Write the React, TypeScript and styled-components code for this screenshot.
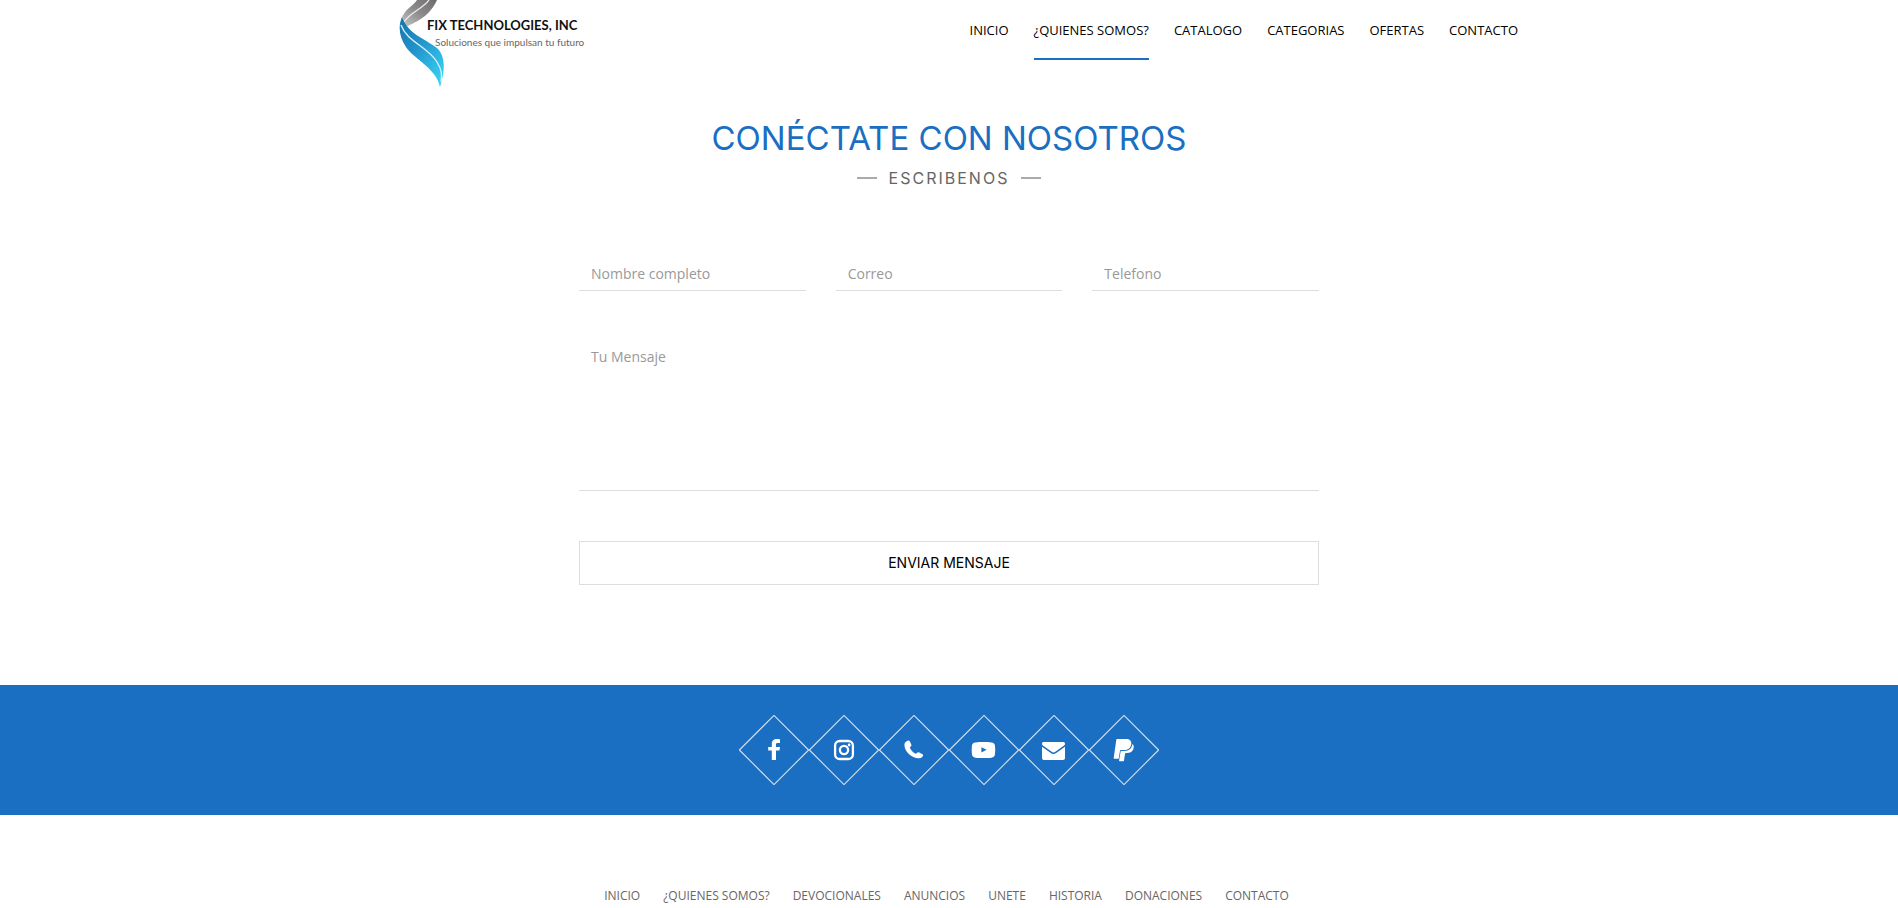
import React from "react";
import styled, { createGlobalStyle } from "styled-components";

const BLUE = "#1a6fc3";
const BODY_FONT = '"Open Sans", "Noto Sans", sans-serif';
const TITLE_FONT = 'Inter, "Open Sans", sans-serif';
const LOGO_FONT = 'Lato, "Open Sans", sans-serif';

const GlobalStyle = createGlobalStyle`
  *, *::before, *::after { box-sizing: border-box; }
  body {
    margin: 0;
    background: #fff;
    color: #666;
    font-family: ${BODY_FONT};
    font-size: 14px;
    line-height: 20px;
    overflow-x: hidden;
  }
`;

const Header = styled.header`
  display: flex;
  justify-content: space-between;
  align-items: flex-start;
  width: 100%;
  max-width: 1170px;
  margin: 0 auto;
  padding: 0 16px 0 15px;
`;

const LogoLink = styled.a`
  display: block;
  margin-left: 20px;
`;

const LogoArt = styled.svg`
  display: block;
`;

const MainNav = styled.nav`
  display: flex;
  gap: 25px;
`;

const NavLink = styled.a<{ $active?: boolean }>`
  padding: 20px 0 18px;
  border-bottom: 2px solid ${(p) => (p.$active ? BLUE : "transparent")};
  color: #000;
  font-size: 13px;
  text-decoration: none;
`;

const Contact = styled.main`
  width: 100%;
  max-width: 770px;
  margin: 0 auto;
  padding: 28px 15px 100px;
`;

const Title = styled.h2`
  margin: 0;
  color: ${BLUE};
  font-family: ${TITLE_FONT};
  font-size: 33px;
  font-weight: 400;
  line-height: 40px;
  text-align: center;
`;

const Subtitle = styled.p`
  display: flex;
  justify-content: center;
  align-items: center;
  gap: 12px;
  margin: 9px 0 68px;
  font-family: ${TITLE_FONT};
  font-size: 16px;
  line-height: 22px;
  letter-spacing: 2px;

  &::before, &::after {
    content: "";
    width: 20px;
    height: 2px;
    background: #aaa;
  }
`;

const Form = styled.form`
  display: grid;
  grid-template-columns: repeat(3, 1fr);
  column-gap: 30px;
  row-gap: 50px;
`;

const Input = styled.input`
  width: 100%;
  height: 34px;
  padding: 6px 12px;
  border: 0;
  border-bottom: 1px solid #ddd;
  background: transparent;
  font: 14px/20px ${BODY_FONT};
  color: #555;
  &::placeholder { color: #999; opacity: 1; }
`;

const Message = styled.textarea`
  grid-column: 1 / -1;
  display: block;
  width: 100%;
  height: 150px;
  padding: 6px 12px;
  border: 0;
  border-bottom: 1px solid #ddd;
  background: transparent;
  font: 14px/20px ${BODY_FONT};
  color: #555;
  resize: none;
  &::placeholder { color: #999; opacity: 1; }
`;

const Submit = styled.button`
  grid-column: 1 / -1;
  height: 44px;
  padding: 0 12px;
  border: 1px solid #ddd;
  background: #fff;
  color: #000;
  font: 14px/20px ${TITLE_FONT};
  cursor: pointer;
`;

const SocialBand = styled.section`
  display: flex;
  justify-content: center;
  padding: 30px 15px;
  background: ${BLUE};
`;

const SocialLink = styled.a`
  display: block;
  width: 70px;
  height: 70px;
  color: #fff;
`;

const Footer = styled.footer`
  padding: 71px 20px 40px 15px;
`;

const FooterNav = styled.nav`
  display: flex;
  flex-wrap: wrap;
  justify-content: center;
  gap: 23px;
`;

const FooterLink = styled.a`
  color: #666;
  font-size: 12px;
  text-decoration: none;
`;

const navItems = ["INICIO", "¿QUIENES SOMOS?", "CATALOGO", "CATEGORIAS", "OFERTAS", "CONTACTO"];
const footerItems = ["INICIO", "¿QUIENES SOMOS?", "DEVOCIONALES", "ANUNCIOS", "UNETE", "HISTORIA", "DONACIONES", "CONTACTO"];
const fields = [
  { label: "Nombre completo", type: "text" },
  { label: "Correo", type: "email" },
  { label: "Telefono", type: "tel" },
];

const socials = [
  {
    name: "Facebook",
    icon: <path d="M41 24.2v3.8h-2.3c-1.2 0-1.7.5-1.7 1.5v2.4h4l-.5 3.7H37V45h-4.2v-9.4h-3.6v-3.7h3.6V29c0-3.2 2.1-5 5.1-5 1.3 0 2.5.1 3.1.2z" fill="currentColor" />,
  },
  {
    name: "Instagram",
    icon: (
      <>
        <rect x="26.1" y="26" width="17.8" height="18" rx="4.6" fill="none" stroke="currentColor" strokeWidth="2.3" />
        <circle cx="35" cy="35" r="4.1" fill="none" stroke="currentColor" strokeWidth="2.3" />
        <circle cx="40.1" cy="30" r="1.4" fill="currentColor" />
      </>
    ),
  },
  {
    name: "Telefono",
    icon: <path d="M28.6 25.7c.9-.4 1.7-.2 2.1.6l1.6 3.2c.3.7.2 1.2-.3 1.8l-1.2 1.2c1.1 3 3.2 5 6.1 6.2l1.7-1.2c.5-.4 1-.4 1.6-.1l3.2 1.8c.7.4.8 1 .5 1.7-.8 1.6-2.4 2.4-4.3 2.4-7 0-14.2-6.6-14.2-13.5 0-2 1.3-3.4 3.2-4.1z" fill="currentColor" />,
  },
  {
    name: "YouTube",
    icon: (
      <path fillRule="evenodd" d="M26.5 27.4c4.4-.5 11.6-.5 15.9 0 2.3.2 3.4 1.3 3.6 3.6.3 2.6.3 5.3 0 8-.2 2.3-1.3 3.4-3.6 3.7-4.3.4-11.5.4-15.9 0-2.3-.3-3.4-1.4-3.6-3.7-.3-2.7-.3-5.4 0-8 .2-2.3 1.3-3.4 3.6-3.6zM32.4 32.2v5.2l5.2-2.6z" fill="currentColor" />
    ),
  },
  {
    name: "Correo",
    icon: (
      <>
        <path d="M25 27h19c1.3 0 2 .7 2 1.7 0 .9-.5 1.5-1.2 2l-8.5 6c-1.3.9-2.3.9-3.6 0l-8.5-6c-.7-.5-1.2-1.1-1.2-2 0-1 .7-1.7 2-1.7z" fill="currentColor" />
        <path d="M23 31.8l8.8 6.2c1.9 1.3 3.5 1.3 5.4 0l8.8-6.2V43c0 1.3-.7 2-2 2H25c-1.3 0-2-.7-2-2z" fill="currentColor" />
      </>
    ),
  },
  {
    name: "PayPal",
    icon: (
      <>
        <path d="M28 24h9.1c3.4 0 5.7 1.9 5.2 5.3-.6 4-3.4 5.8-7.3 5.8h-2.8c-.8 0-1.1.4-1.3 1.1l-1.2 7.6h-4.5c-.4 0-.6-.3-.5-.7l2.6-18.3c.1-.5.3-.8.7-.8z" fill="currentColor" />
        <path d="M43.4 29.1c1.2.8 1.6 2.1 1.2 4-.7 3.5-3 4.9-6.5 4.9h-1c-.7 0-1 .4-1.1 1l-1 6.6c-.1.5-.3.7-.8.7h-3.6c-.4 0-.6-.3-.5-.7l1.5-9c.1-.5.4-.7.9-.7h2.8c4.5 0 7.6-2.1 8.1-6.8z" fill="currentColor" />
      </>
    ),
  },
];

function Logo() {
  return (
    <LogoArt width="190" height="90" viewBox="0 0 190 90" role="img" aria-label="Fix Technologies, Inc">
      <defs>
        <linearGradient id="steel" x1="0" y1="1" x2="1" y2="0">
          <stop offset="0" stopColor="#c9c9c9" />
          <stop offset="0.5" stopColor="#8d8b8b" />
          <stop offset="1" stopColor="#6e6c6c" />
        </linearGradient>
        <linearGradient id="water" x1="0" y1="0" x2="0.8" y2="1">
          <stop offset="0" stopColor="#1673ac" />
          <stop offset="0.45" stopColor="#2293cb" />
          <stop offset="1" stopColor="#35d0f4" />
        </linearGradient>
      </defs>
      <path d="M18 0C14 6 5 10 3 18l4 9C14 23 30 18 38 0z" fill="url(#steel)" />
      <path d="M30 0C24 9 11 12 5 22" fill="none" stroke="#eee" strokeWidth="1.3" />
      <path d="M3 17C-1 26 0 37 7 47c9 13 30 21 34 40 5-17 6-30-3-39C25 38 9 34 3 17z" fill="url(#water)" />
      <path d="M2 25c6 17 26 21 36 37 5 8 5 13 4 20" fill="none" stroke="#d8f1fb" strokeWidth="1.4" />
      <text x="28" y="30" fill="#111" fontFamily={LOGO_FONT} fontSize="13" fontWeight="700">FIX TECHNOLOGIES, INC</text>
      <text x="36" y="46" fill="#666" fontFamily={LOGO_FONT} fontSize="10">Soluciones que impulsan tu futuro</text>
    </LogoArt>
  );
}

export default function App() {
  return (
    <>
      <GlobalStyle />
      <Header>
        <LogoLink href="#"><Logo /></LogoLink>
        <MainNav>
          {navItems.map((item, i) => (
            <NavLink key={item} href="#" $active={i === 1}>{item}</NavLink>
          ))}
        </MainNav>
      </Header>
      <Contact>
        <Title>CONÉCTATE CON NOSOTROS</Title>
        <Subtitle>ESCRIBENOS</Subtitle>
        <Form onSubmit={(e) => e.preventDefault()}>
          {fields.map((f) => (
            <Input key={f.label} type={f.type} placeholder={f.label} aria-label={f.label} />
          ))}
          <Message placeholder="Tu Mensaje" aria-label="Tu Mensaje" />
          <Submit type="submit">ENVIAR MENSAJE</Submit>
        </Form>
      </Contact>
      <SocialBand>
        {socials.map((s) => (
          <SocialLink key={s.name} href="#" aria-label={s.name}>
            <svg width="70" height="70" viewBox="0 0 70 70" aria-hidden="true">
              <path d="M35 .4L69.6 35 35 69.6.4 35z" fill="none" stroke="#d5dfea" strokeWidth="1.1" />
              {s.icon}
            </svg>
          </SocialLink>
        ))}
      </SocialBand>
      <Footer>
        <FooterNav>
          {footerItems.map((item) => (
            <FooterLink key={item} href="#">{item}</FooterLink>
          ))}
        </FooterNav>
      </Footer>
    </>
  );
}
